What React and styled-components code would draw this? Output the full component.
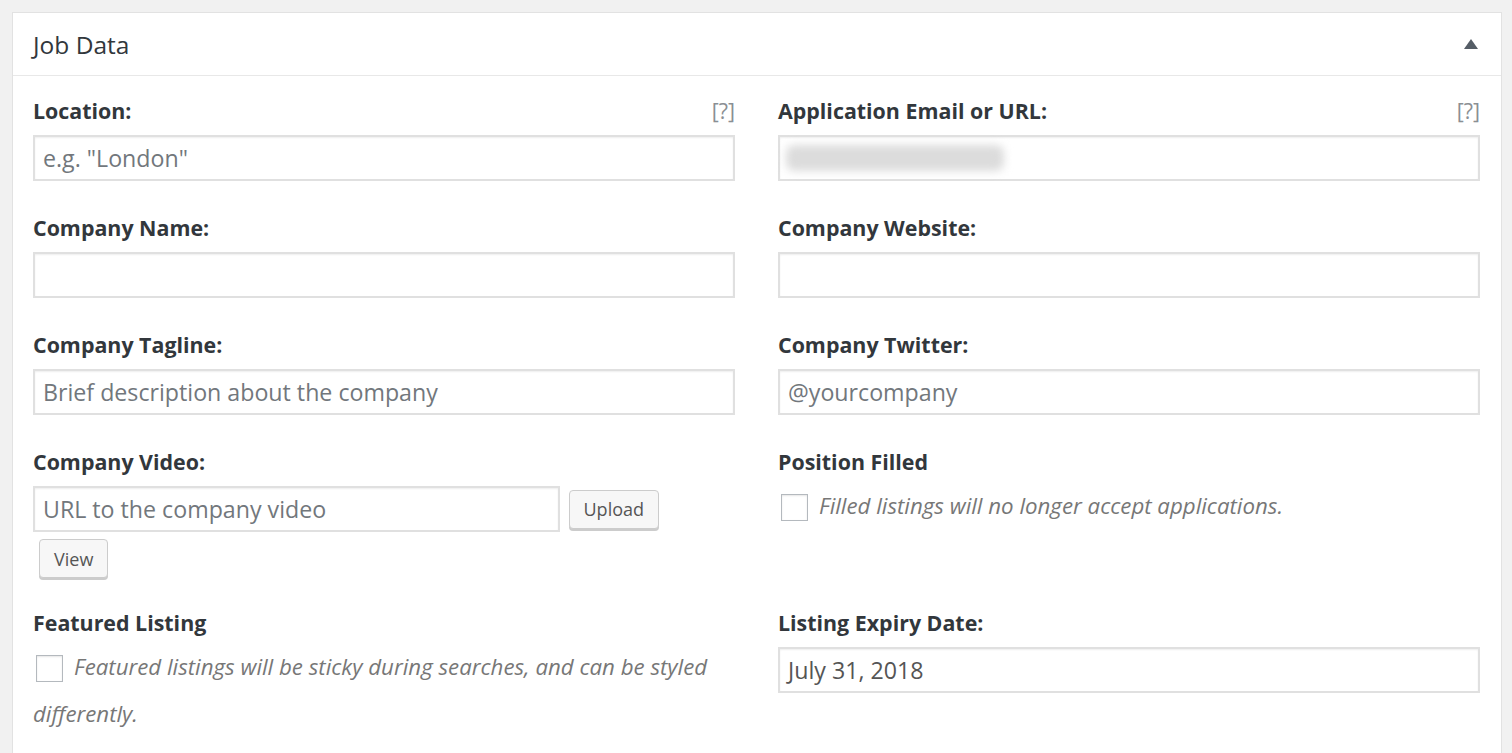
import React from 'react';
import styled, { createGlobalStyle } from 'styled-components';

const Global = createGlobalStyle`
  html, body {
    margin: 0;
    padding: 0;
    background: #f1f1f1;
    font-family: "Open Sans", "Noto Sans", sans-serif;
    color: #23282d;
  }
`;

const Page = styled.div`
  padding: 12px 10px 0 12px;
  height: 753px;
  box-sizing: border-box;
  overflow: hidden;
`;

const Panel = styled.section`
  background: #fff;
  border: 1px solid #e2e2e2;
  min-height: 760px;
`;

const Header = styled.header`
  height: 62px;
  display: flex;
  align-items: center;
  justify-content: space-between;
  padding: 0 23px 0 20px;
  border-bottom: 1px solid #e8e8e8;
`;

const Title = styled.h2`
  margin: 0;
  font-size: 24.5px;
  font-weight: 400;
  color: #32373c;
`;

// 접기 화살표
const Toggle = styled.span`
  width: 0;
  height: 0;
  border-left: 7px solid transparent;
  border-right: 7px solid transparent;
  border-bottom: 10px solid #555d66;
`;

const Body = styled.div`
  display: grid;
  grid-template-columns: 702px 702px;
  column-gap: 43px;
  row-gap: 32px;
  padding: 20px 21px 0 20px;
`;

const Field = styled.div`
  display: flex;
  flex-direction: column;
`;

const LabelRow = styled.div`
  display: flex;
  justify-content: space-between;
  align-items: center;
  height: 29px;
  margin-bottom: 10px;
`;

const Label = styled.label`
  font-size: 21.4px;
  font-weight: 700;
  color: #32373c;
`;

const Help = styled.span`
  font-size: 21.4px;
  color: #8a8f94;
`;

const Input = styled.div`
  box-sizing: border-box;
  width: ${(props) => props.width || '100%'};
  height: 46px;
  border: 2px solid #e0e0e0;
  box-shadow: inset 0 1px 2px rgba(0, 0, 0, 0.07);
  background: #fff;
  display: flex;
  align-items: center;
  padding: 0 8px;
  font-size: 23.2px;
  white-space: nowrap;
  color: ${(props) => (props.value ? '#555' : '#72777c')};
`;

const Blurred = styled.div`
  width: 218px;
  height: 26px;
  margin-left: -2px;
  border-radius: 8px;
  background: #dcdcdc;
  filter: blur(4px);
`;

const Wrap = styled.div`
  display: flex;
  flex-wrap: wrap;
  align-items: center;
  column-gap: 3px;
  row-gap: 7px;
  margin-bottom: -2px;
`;

const Button = styled.button`
  margin-left: 6px;
  height: 39px;
  padding: 0 14px;
  font-family: inherit;
  font-size: 18px;
  color: #555;
  background: #f7f7f7;
  border: 1px solid #ccc;
  border-radius: 4px;
  box-shadow: 0 2px 0 #ccc;
`;

const CheckLine = styled.div`
  margin-top: -4px;
  line-height: 47px;
  font-size: 22.25px;
  font-style: italic;
  color: #777;
`;

const Box = styled.span`
  display: inline-block;
  box-sizing: border-box;
  width: 27px;
  height: 27px;
  margin: 0 11px 0 3px;
  vertical-align: -7px;
  border: 1px solid #b4b9be;
  box-shadow: inset 0 1px 2px rgba(0, 0, 0, 0.1);
  background: #fff;
`;

const App = () => {
  return (
    <Page>
      <Global />
      <Panel>
        <Header>
          <Title>Job Data</Title>
          <Toggle />
        </Header>
        <Body>
          <Field>
            <LabelRow>
              <Label>Location:</Label>
              <Help>[?]</Help>
            </LabelRow>
            <Input>e.g. "London"</Input>
          </Field>
          <Field>
            <LabelRow>
              <Label>Application Email or URL:</Label>
              <Help>[?]</Help>
            </LabelRow>
            <Input>
              <Blurred />
            </Input>
          </Field>

          <Field>
            <LabelRow>
              <Label>Company Name:</Label>
            </LabelRow>
            <Input />
          </Field>
          <Field>
            <LabelRow>
              <Label>Company Website:</Label>
            </LabelRow>
            <Input />
          </Field>

          <Field>
            <LabelRow>
              <Label>Company Tagline:</Label>
            </LabelRow>
            <Input>Brief description about the company</Input>
          </Field>
          <Field>
            <LabelRow>
              <Label>Company Twitter:</Label>
            </LabelRow>
            <Input>@yourcompany</Input>
          </Field>

          <Field>
            <LabelRow>
              <Label>Company Video:</Label>
            </LabelRow>
            <Wrap>
              <Input width="75%">URL to the company video</Input>
              <Button>Upload</Button>
              <Button>View</Button>
            </Wrap>
          </Field>
          <Field>
            <LabelRow>
              <Label>Position Filled</Label>
            </LabelRow>
            <CheckLine>
              <Box />
              Filled listings will no longer accept applications.
            </CheckLine>
          </Field>

          <Field>
            <LabelRow>
              <Label>Featured Listing</Label>
            </LabelRow>
            <CheckLine>
              <Box />
              Featured listings will be sticky during searches, and can be styled differently.
            </CheckLine>
          </Field>
          <Field>
            <LabelRow>
              <Label>Listing Expiry Date:</Label>
            </LabelRow>
            <Input value>July 31, 2018</Input>
          </Field>
        </Body>
      </Panel>
    </Page>
  );
};

export default App;
